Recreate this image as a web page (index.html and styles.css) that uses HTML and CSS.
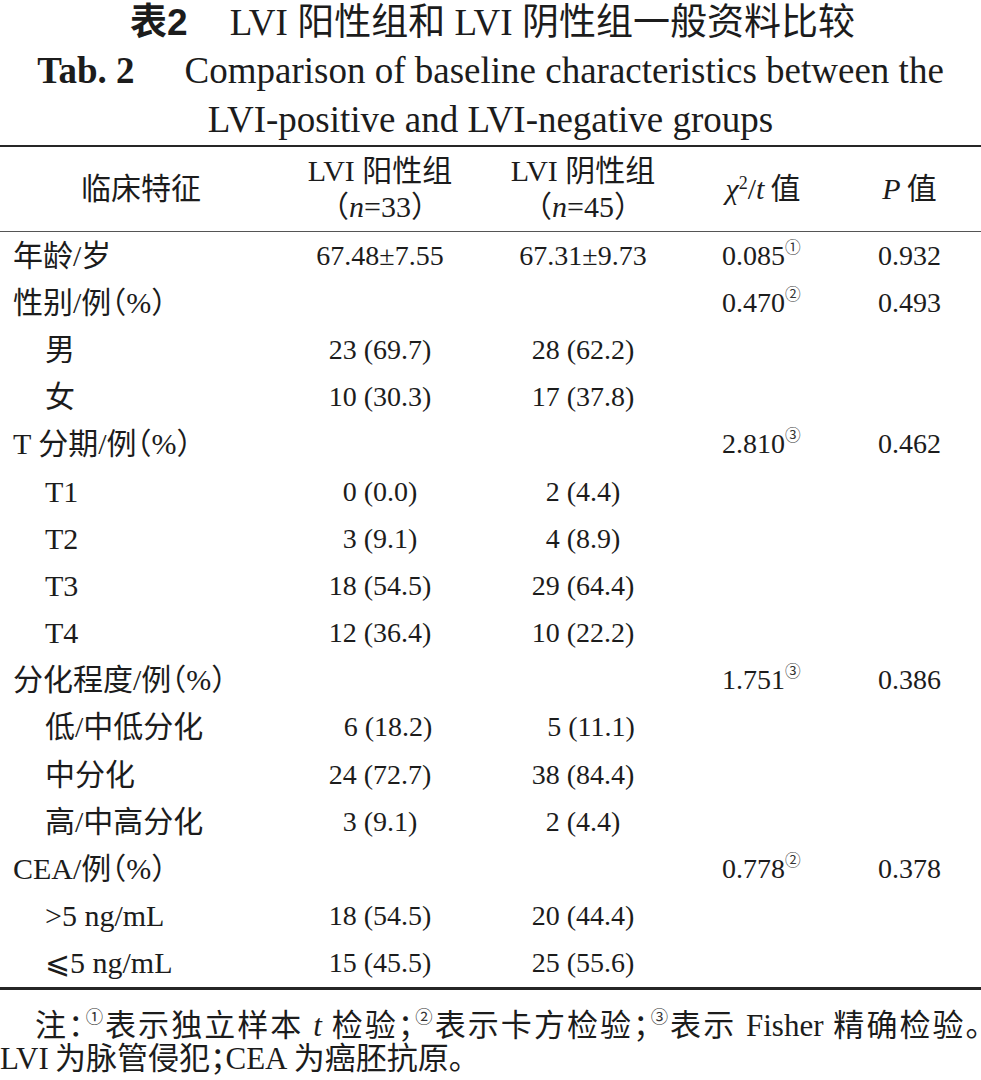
FILE: index.html
```html
<!DOCTYPE html>
<html lang="zh">
<head>
<meta charset="utf-8">
<title>表2 LVI阳性组和LVI阴性组一般资料比较</title>
<link rel="stylesheet" href="styles.css">
</head>
<body>
<div class="page">
  <div class="caption">
    <div class="cap-zh"><span class="cap-no">表2</span><span class="cap-text">LVI 阳性组和 LVI 阴性组一般资料比较</span></div>
    <div class="cap-en"><span class="cap-no-en">Tab. 2</span>Comparison of baseline characteristics between the</div>
    <div class="cap-en">LVI-positive and LVI-negative groups</div>
  </div>
  <table class="tbl">
    <colgroup>
      <col class="c1"><col class="c2"><col class="c3"><col class="c4"><col class="c5">
    </colgroup>
    <thead>
      <tr>
        <th>临床特征</th>
        <th>LVI 阳性组<br>（<i>n</i>=33）</th>
        <th>LVI 阴性组<br>（<i>n</i>=45）</th>
        <th><i>χ</i><sup>2</sup>/<i>t</i>&#8201;值</th>
        <th><i>P</i>&#8201;值</th>
      </tr>
    </thead>
    <tbody>
      <tr><td>年龄/岁</td><td>67.48±7.55</td><td>67.31±9.73</td><td class="stat">0.085<sup class="mk">①</sup></td><td>0.932</td></tr>
      <tr><td>性别/例（%）</td><td></td><td></td><td class="stat">0.470<sup class="mk">②</sup></td><td>0.493</td></tr>
      <tr><td class="sub">男</td><td>23 (69.7)</td><td>28 (62.2)</td><td></td><td></td></tr>
      <tr><td class="sub">女</td><td>10 (30.3)</td><td>17 (37.8)</td><td></td><td></td></tr>
      <tr><td>T 分期/例（%）</td><td></td><td></td><td class="stat">2.810<sup class="mk">③</sup></td><td>0.462</td></tr>
      <tr><td class="sub">T1</td><td>0 (0.0)</td><td>2 (4.4)</td><td></td><td></td></tr>
      <tr><td class="sub">T2</td><td>3 (9.1)</td><td>4 (8.9)</td><td></td><td></td></tr>
      <tr><td class="sub">T3</td><td>18 (54.5)</td><td>29 (64.4)</td><td></td><td></td></tr>
      <tr><td class="sub">T4</td><td>12 (36.4)</td><td>10 (22.2)</td><td></td><td></td></tr>
      <tr><td>分化程度/例（%）</td><td></td><td></td><td class="stat">1.751<sup class="mk">③</sup></td><td>0.386</td></tr>
      <tr><td class="sub">低/中低分化</td><td class="pad">6 (18.2)</td><td class="pad">5 (11.1)</td><td></td><td></td></tr>
      <tr><td class="sub">中分化</td><td>24 (72.7)</td><td>38 (84.4)</td><td></td><td></td></tr>
      <tr><td class="sub">高/中高分化</td><td>3 (9.1)</td><td>2 (4.4)</td><td></td><td></td></tr>
      <tr><td>CEA/例（%）</td><td></td><td></td><td class="stat">0.778<sup class="mk">②</sup></td><td>0.378</td></tr>
      <tr><td class="sub">&gt;5 ng/mL</td><td>18 (54.5)</td><td>20 (44.4)</td><td></td><td></td></tr>
      <tr><td class="sub">⩽5 ng/mL</td><td>15 (45.5)</td><td>25 (55.6)</td><td></td><td></td></tr>
    </tbody>
  </table>
  <div class="note">
    <p class="note-l1">注：<sup class="mk">①</sup>表示独立样本 <i>t</i> 检验；<sup class="mk">②</sup>表示卡方检验；<sup class="mk">③</sup>表示 Fisher 精确检验。</p>
    <p class="note-l2">LVI&#8201;为脉管侵犯；CEA&#8201;为癌胚抗原。</p>
  </div>
</div>
</body>
</html>
```

FILE: styles.css
```css
html, body {
  margin: 0;
  padding: 0;
  background: #ffffff;
}
body {
  font-family: "Liberation Serif", "Noto Sans CJK SC", serif;
  color: #1c1c1c;
  width: 981px;
}
.page {
  width: 981px;
}
.caption {
  text-align: center;
}
.cap-zh {
  font-size: 37px;
  height: 46px;
  line-height: 46px;
  display: flex;
  justify-content: center;
  align-items: baseline;
  gap: 42px;
  padding-left: 4px;
  white-space: nowrap;
}
.cap-no {
  font-family: "Liberation Sans", "Noto Sans CJK SC", sans-serif;
  font-weight: 700;
}
.cap-en {
  font-size: 37px;
  line-height: 49px;
  white-space: nowrap;
}
.cap-no-en {
  font-weight: 700;
  margin-right: 50px;
}
.tbl {
  width: 981px;
  border-collapse: collapse;
  font-size: 28px;
  border-top: 2px solid #262626;
  border-bottom: 3px solid #262626;
  margin-top: 1px;
}
.c1 { width: 282px; }
.c2 { width: 196px; }
.c3 { width: 210px; }
.c4 { width: 150px; }
.c5 { width: 143px; }
.tbl th {
  font-weight: 400;
  font-size: 30px;
  text-align: center;
  line-height: 36px;
  height: 84px;
  padding: 0;
  border-bottom: 1px solid #555;
  vertical-align: middle;
}
.tbl td {
  text-align: center;
  height: 47.2px;
  padding: 0;
  line-height: 30px;
  vertical-align: middle;
  white-space: nowrap;
}
.tbl td:first-child {
  text-align: left;
  padding-left: 13px;
  font-size: 30px;
  font-feature-settings: "halt";
}
.tbl td.sub {
  padding-left: 45px;
}
.tbl td.pad {
  padding-left: 16px;
}
.tbl td.stat {
  text-align: left;
  padding-left: 34px;
}
sup {
  font-size: 60%;
  line-height: 0;
  vertical-align: 0.55em;
}
sup.mk {
  font-size: 56%;
  font-family: "Noto Sans CJK SC", sans-serif;
  vertical-align: 0.75em;
  color: #333;
}
.note {
  font-size: 31px;
  line-height: 33px;
  padding-top: 19px;
  font-feature-settings: "halt";
}
.note p {
  margin: 0;
  white-space: nowrap;
}
.note-l1 {
  padding-left: 35px;
  text-align: justify;
  text-align-last: justify;
}
```
